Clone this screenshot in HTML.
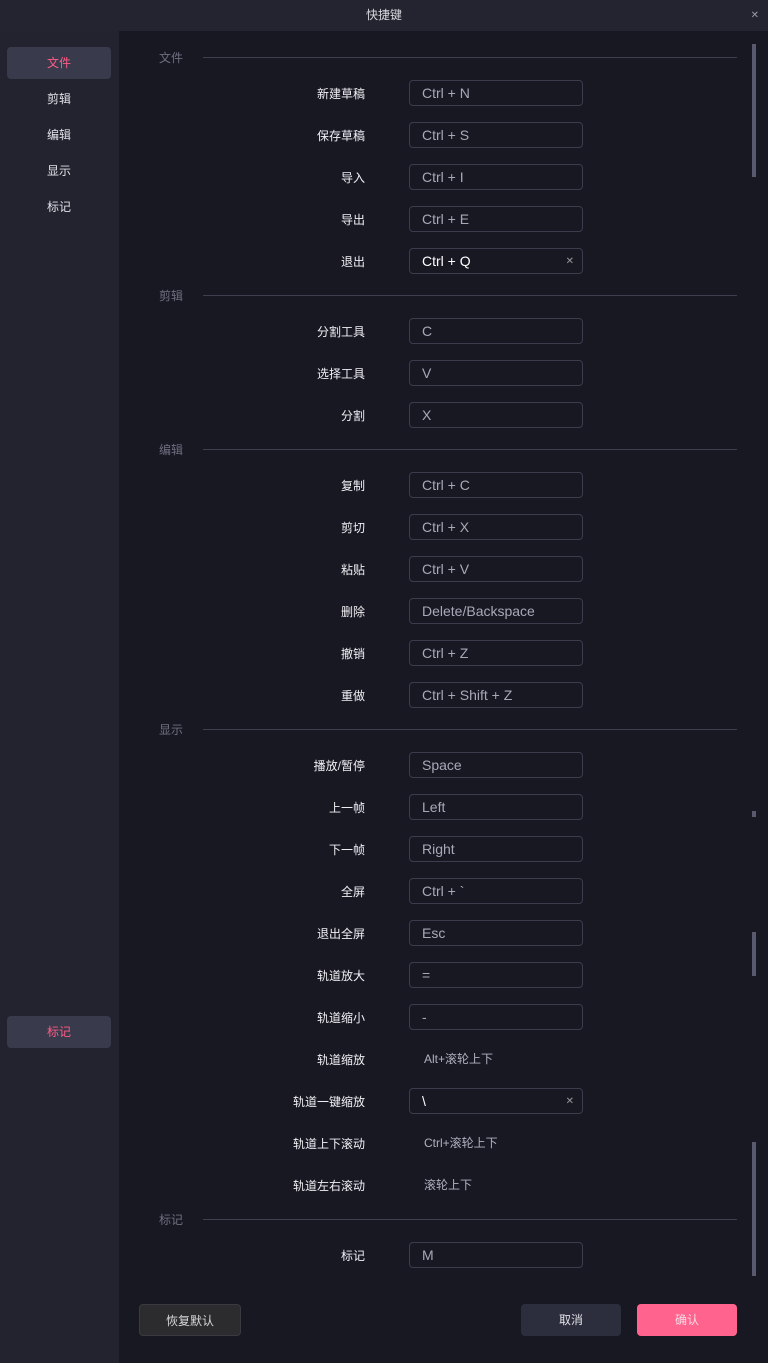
<!DOCTYPE html>
<html><head><meta charset="utf-8"><style>
*{margin:0;padding:0;box-sizing:border-box}
body{width:768px;height:1363px;background:#181823;font-family:"Liberation Sans","Noto Sans CJK SC",sans-serif;position:relative;overflow:hidden;color:#e8e8ee}
.title{position:absolute;left:0;top:0;width:768px;height:31px;background:#23242f;text-align:center;line-height:31px;font-size:12px;color:#d8d8de}
.close{position:absolute;right:9px;top:0;font-size:10px;color:#9a9aa8}
.side{position:absolute;left:0;top:31px;width:119px;height:1332px;background:#22232f}
.nav{position:absolute;left:7px;width:104px;height:32px;line-height:33px;text-align:center;font-size:12px;color:#e0e0e6;border-radius:4px}
.nav.a{background:#393a4b;color:#ff5c86}
.sec{position:absolute;left:159px;font-size:12px;color:#6e6e80;height:16px;line-height:17px}
.line{position:absolute;left:203px;width:534px;height:1px;background:#3e3e50}
.lab{position:absolute;right:403px;font-size:12px;color:#f0f0f4;height:26px;line-height:28px;white-space:nowrap}
.inp{position:absolute;left:409px;width:174px;height:26px;border:1px solid #3c3c4e;border-radius:4px;font-size:14px;color:#a8a8b8;line-height:25px;padding-left:12px}
.inp.w{color:#fff}
.inp .x{position:absolute;right:8px;top:0;font-size:10px;color:#999}
.txt{position:absolute;left:424px;font-size:12px;color:#b0b0c0;height:26px;line-height:26px}
.sb{position:absolute;left:752px;width:4px;background:#5a5a6e}
.btn{position:absolute;top:1304px;height:32px;line-height:32px;text-align:center;font-size:12px;border-radius:4px}
</style></head><body>
<div class="title">快捷键<span class="close">✕</span></div>
<div class="side">
<div class="nav a" style="top:16px">文件</div>
<div class="nav" style="top:52px">剪辑</div>
<div class="nav" style="top:88px">编辑</div>
<div class="nav" style="top:124px">显示</div>
<div class="nav" style="top:160px">标记</div>
<div class="nav a" style="top:985px">标记</div>
</div>

<div class="sec" style="top:50px">文件</div><div class="line" style="top:57px"></div>
<div class="lab" style="top:80px">新建草稿</div><div class="inp" style="top:80px">Ctrl + N</div>
<div class="lab" style="top:122px">保存草稿</div><div class="inp" style="top:122px">Ctrl + S</div>
<div class="lab" style="top:164px">导入</div><div class="inp" style="top:164px">Ctrl + I</div>
<div class="lab" style="top:206px">导出</div><div class="inp" style="top:206px">Ctrl + E</div>
<div class="lab" style="top:248px">退出</div><div class="inp w" style="top:248px">Ctrl + Q<span class="x">✕</span></div>

<div class="sec" style="top:288px">剪辑</div><div class="line" style="top:295px"></div>
<div class="lab" style="top:318px">分割工具</div><div class="inp" style="top:318px">C</div>
<div class="lab" style="top:360px">选择工具</div><div class="inp" style="top:360px">V</div>
<div class="lab" style="top:402px">分割</div><div class="inp" style="top:402px">X</div>

<div class="sec" style="top:442px">编辑</div><div class="line" style="top:449px"></div>
<div class="lab" style="top:472px">复制</div><div class="inp" style="top:472px">Ctrl + C</div>
<div class="lab" style="top:514px">剪切</div><div class="inp" style="top:514px">Ctrl + X</div>
<div class="lab" style="top:556px">粘贴</div><div class="inp" style="top:556px">Ctrl + V</div>
<div class="lab" style="top:598px">删除</div><div class="inp" style="top:598px">Delete/Backspace</div>
<div class="lab" style="top:640px">撤销</div><div class="inp" style="top:640px">Ctrl + Z</div>
<div class="lab" style="top:682px">重做</div><div class="inp" style="top:682px">Ctrl + Shift + Z</div>

<div class="sec" style="top:722px">显示</div><div class="line" style="top:729px"></div>
<div class="lab" style="top:752px">播放/暂停</div><div class="inp" style="top:752px">Space</div>
<div class="lab" style="top:794px">上一帧</div><div class="inp" style="top:794px">Left</div>
<div class="lab" style="top:836px">下一帧</div><div class="inp" style="top:836px">Right</div>
<div class="lab" style="top:878px">全屏</div><div class="inp" style="top:878px">Ctrl + `</div>
<div class="lab" style="top:920px">退出全屏</div><div class="inp" style="top:920px">Esc</div>
<div class="lab" style="top:962px">轨道放大</div><div class="inp" style="top:962px">=</div>
<div class="lab" style="top:1004px">轨道缩小</div><div class="inp" style="top:1004px">-</div>
<div class="lab" style="top:1046px">轨道缩放</div><div class="txt" style="top:1046px">Alt+滚轮上下</div>
<div class="lab" style="top:1088px">轨道一键缩放</div><div class="inp w" style="top:1088px">\<span class="x">✕</span></div>
<div class="lab" style="top:1130px">轨道上下滚动</div><div class="txt" style="top:1130px">Ctrl+滚轮上下</div>
<div class="lab" style="top:1172px">轨道左右滚动</div><div class="txt" style="top:1172px">滚轮上下</div>

<div class="sec" style="top:1212px">标记</div><div class="line" style="top:1219px"></div>
<div class="lab" style="top:1242px">标记</div><div class="inp" style="top:1242px">M</div>

<div class="sb" style="top:44px;height:133px"></div>
<div class="sb" style="top:811px;height:6px"></div>
<div class="sb" style="top:932px;height:44px"></div>
<div class="sb" style="top:1142px;height:134px"></div>

<div class="btn" style="left:139px;width:102px;background:#2c2c2e;border:1px solid #3a3a40;color:#d8d8d8">恢复默认</div>
<div class="btn" style="left:521px;width:100px;background:#2c2d3d;color:#e0e0e6">取消</div>
<div class="btn" style="left:637px;width:100px;background:#ff638e;color:#f4dce4">确认</div>
</body></html>
